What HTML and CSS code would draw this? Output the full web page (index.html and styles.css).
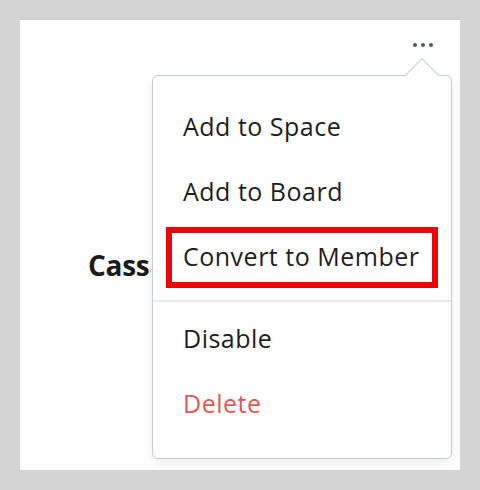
FILE: index.html
```html
<!DOCTYPE html>
<html lang="en">
<head>
<meta charset="utf-8">
<title>Member menu</title>
<link rel="stylesheet" href="styles.css">
</head>
<body>
  <div class="panel">
    <div class="header">
      <button class="more" aria-label="More options"><span></span><span></span><span></span></button>
    </div>
    <div class="profile">
      <h2 class="name">Cassandra Miller</h2>
    </div>
    <div class="menu" role="menu">
      <ul class="group">
        <li class="item">Add to Space</li>
        <li class="item">Add to Board</li>
        <li class="item highlight">Convert to Member</li>
      </ul>
      <hr class="sep">
      <ul class="group">
        <li class="item">Disable</li>
        <li class="item danger">Delete</li>
      </ul>
    </div>
  </div>
</body>
</html>
```
FILE: styles.css
```css
html, body {
  margin: 0;
  padding: 0;
}
body {
  background: #d4d4d4;
  padding: 20px;
  font-family: "Open Sans", "Liberation Sans", sans-serif;
}
.panel {
  position: relative;
  width: 440px;
  height: 450px;
  background: #ffffff;
  overflow: hidden;
}
.header {
  display: flex;
  justify-content: flex-end;
  padding: 23px 27px 0 0;
}
.more {
  display: flex;
  gap: 4px;
  padding: 0;
  border: 0;
  background: transparent;
}
.more span {
  width: 4px;
  height: 4px;
  border-radius: 50%;
  background: #555a60;
}
.profile {
  padding: 201px 0 0 68px;
}
.name {
  margin: 0;
  width: 63px;
  overflow: hidden;
  font-size: 28px;
  line-height: 34px;
  font-weight: 700;
  letter-spacing: -0.3px;
  color: #1b1b1b;
  white-space: nowrap;
}
.menu {
  position: absolute;
  left: 132px;
  top: 55px;
  width: 300px;
  box-sizing: border-box;
  background: #ffffff;
  border: 1.5px solid #c3cedb;
  border-radius: 6px;
  box-shadow: 0 4px 8px rgba(0, 0, 0, 0.08);
  padding: 19px 0 20px;
}
.menu::before {
  content: "";
  position: absolute;
  width: 23px;
  height: 23px;
  right: 17px;
  top: -13px;
  background: #ffffff;
  border-top: 1.5px solid #c3cedb;
  border-left: 1.5px solid #c3cedb;
  transform: rotate(45deg);
}
.group {
  list-style: none;
  margin: 0;
  padding: 0;
}
.item {
  position: relative;
  height: 65px;
  box-sizing: border-box;
  display: flex;
  align-items: center;
  padding: 0 0 4px 30px;
  font-size: 25px;
  letter-spacing: 0.5px;
  color: #1e1e1e;
}
.item.danger {
  color: #e25959;
}
.item.highlight::after {
  content: "";
  position: absolute;
  left: 13px;
  right: 13px;
  top: 2px;
  bottom: 2px;
  border: 6.5px solid #e8080c;
}
.sep {
  border: 0;
  height: 1.5px;
  background: #e8ebef;
  margin: 10px 0 6px;
}
```
